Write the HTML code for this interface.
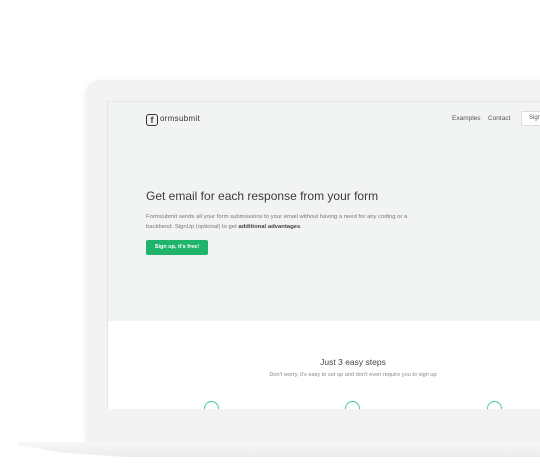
<!DOCTYPE html><html><head><style>
body{margin:0;width:540px;height:468px;background:#fff;position:relative;overflow:hidden;font-family:"Liberation Sans",sans-serif}
.lap{position:absolute;left:85px;top:80px;width:480px;height:363px;background:#f3f3f3;border-radius:16px 0 0 6px;box-shadow:0 0 6px rgba(0,0,0,.05)}
.scr{position:absolute;left:107px;top:101px;width:433px;height:307px;background:#fff;border-top:1px solid #e6e6e6;border-left:1px solid #e6e6e6;overflow:hidden}
.hero{position:absolute;left:0;top:0;width:100%;height:219px;background:#f2f3f3}
.base{position:absolute;left:18px;top:442px;width:540px;height:15px;background:linear-gradient(#f7f7f7,#ececec);clip-path:polygon(0 0,100% 0,100% 100%,20% 100%,8% 70%,0 20%)}
.t{position:absolute;white-space:nowrap;color:#444}
.circ{position:absolute;width:13px;height:13px;border:1px solid #3fcf8e;border-radius:50%;top:299px}
</style></head><body>
<div class="lap"></div>
<div class="base"></div>
<div class="scr">
<div class="hero"></div>
<div class="t" style="left:38px;top:12px;width:10px;height:10px;border:1.3px solid #333;border-radius:3px;font-size:9px;font-weight:bold;line-height:10px;text-align:center">f</div>
<div class="t" style="left:52px;top:12px;font-size:8px;color:#333;letter-spacing:.3px">ormsubmit</div>
<div class="t" style="left:344px;top:13px;font-size:6.5px;color:#555">Examples</div>
<div class="t" style="left:380px;top:13px;font-size:6.5px;color:#555">Contact</div>
<div style="position:absolute;left:413px;top:9px;width:30px;height:13px;border:1px solid #ddd;border-radius:2px;background:#fff;font-size:6px;color:#555;line-height:13px;padding-left:7px">Sign</div>
<div class="t" style="left:38px;top:87px;font-size:12px;color:#3a3a3a">Get email for each response from your form</div>
<div class="t" style="left:38px;top:110px;font-size:5.9px;color:#777;line-height:10px">Formsubmit sends all your form submissions to your email without having a need for any coding or a<br>backbend. SignUp (optional) to get <b style="color:#444">additional advantages</b>.</div>
<div style="position:absolute;left:38px;top:138px;width:62px;height:15px;background:#20b36b;border-radius:2px;color:#fff;font-size:5.5px;font-weight:bold;text-align:center;line-height:15px">Sign up, it's free!</div>
<div class="t" style="left:0;width:490px;text-align:center;top:255px;font-size:8.5px;color:#444">Just 3 easy steps</div>
<div class="t" style="left:0;width:490px;text-align:center;top:270px;font-size:5.6px;color:#888">Don't worry, it's easy to set up and don't even require you to sign up</div>
<div class="circ" style="left:96px"></div>
<div class="circ" style="left:237px"></div>
<div class="circ" style="left:379px"></div>
</div>
</body></html>
